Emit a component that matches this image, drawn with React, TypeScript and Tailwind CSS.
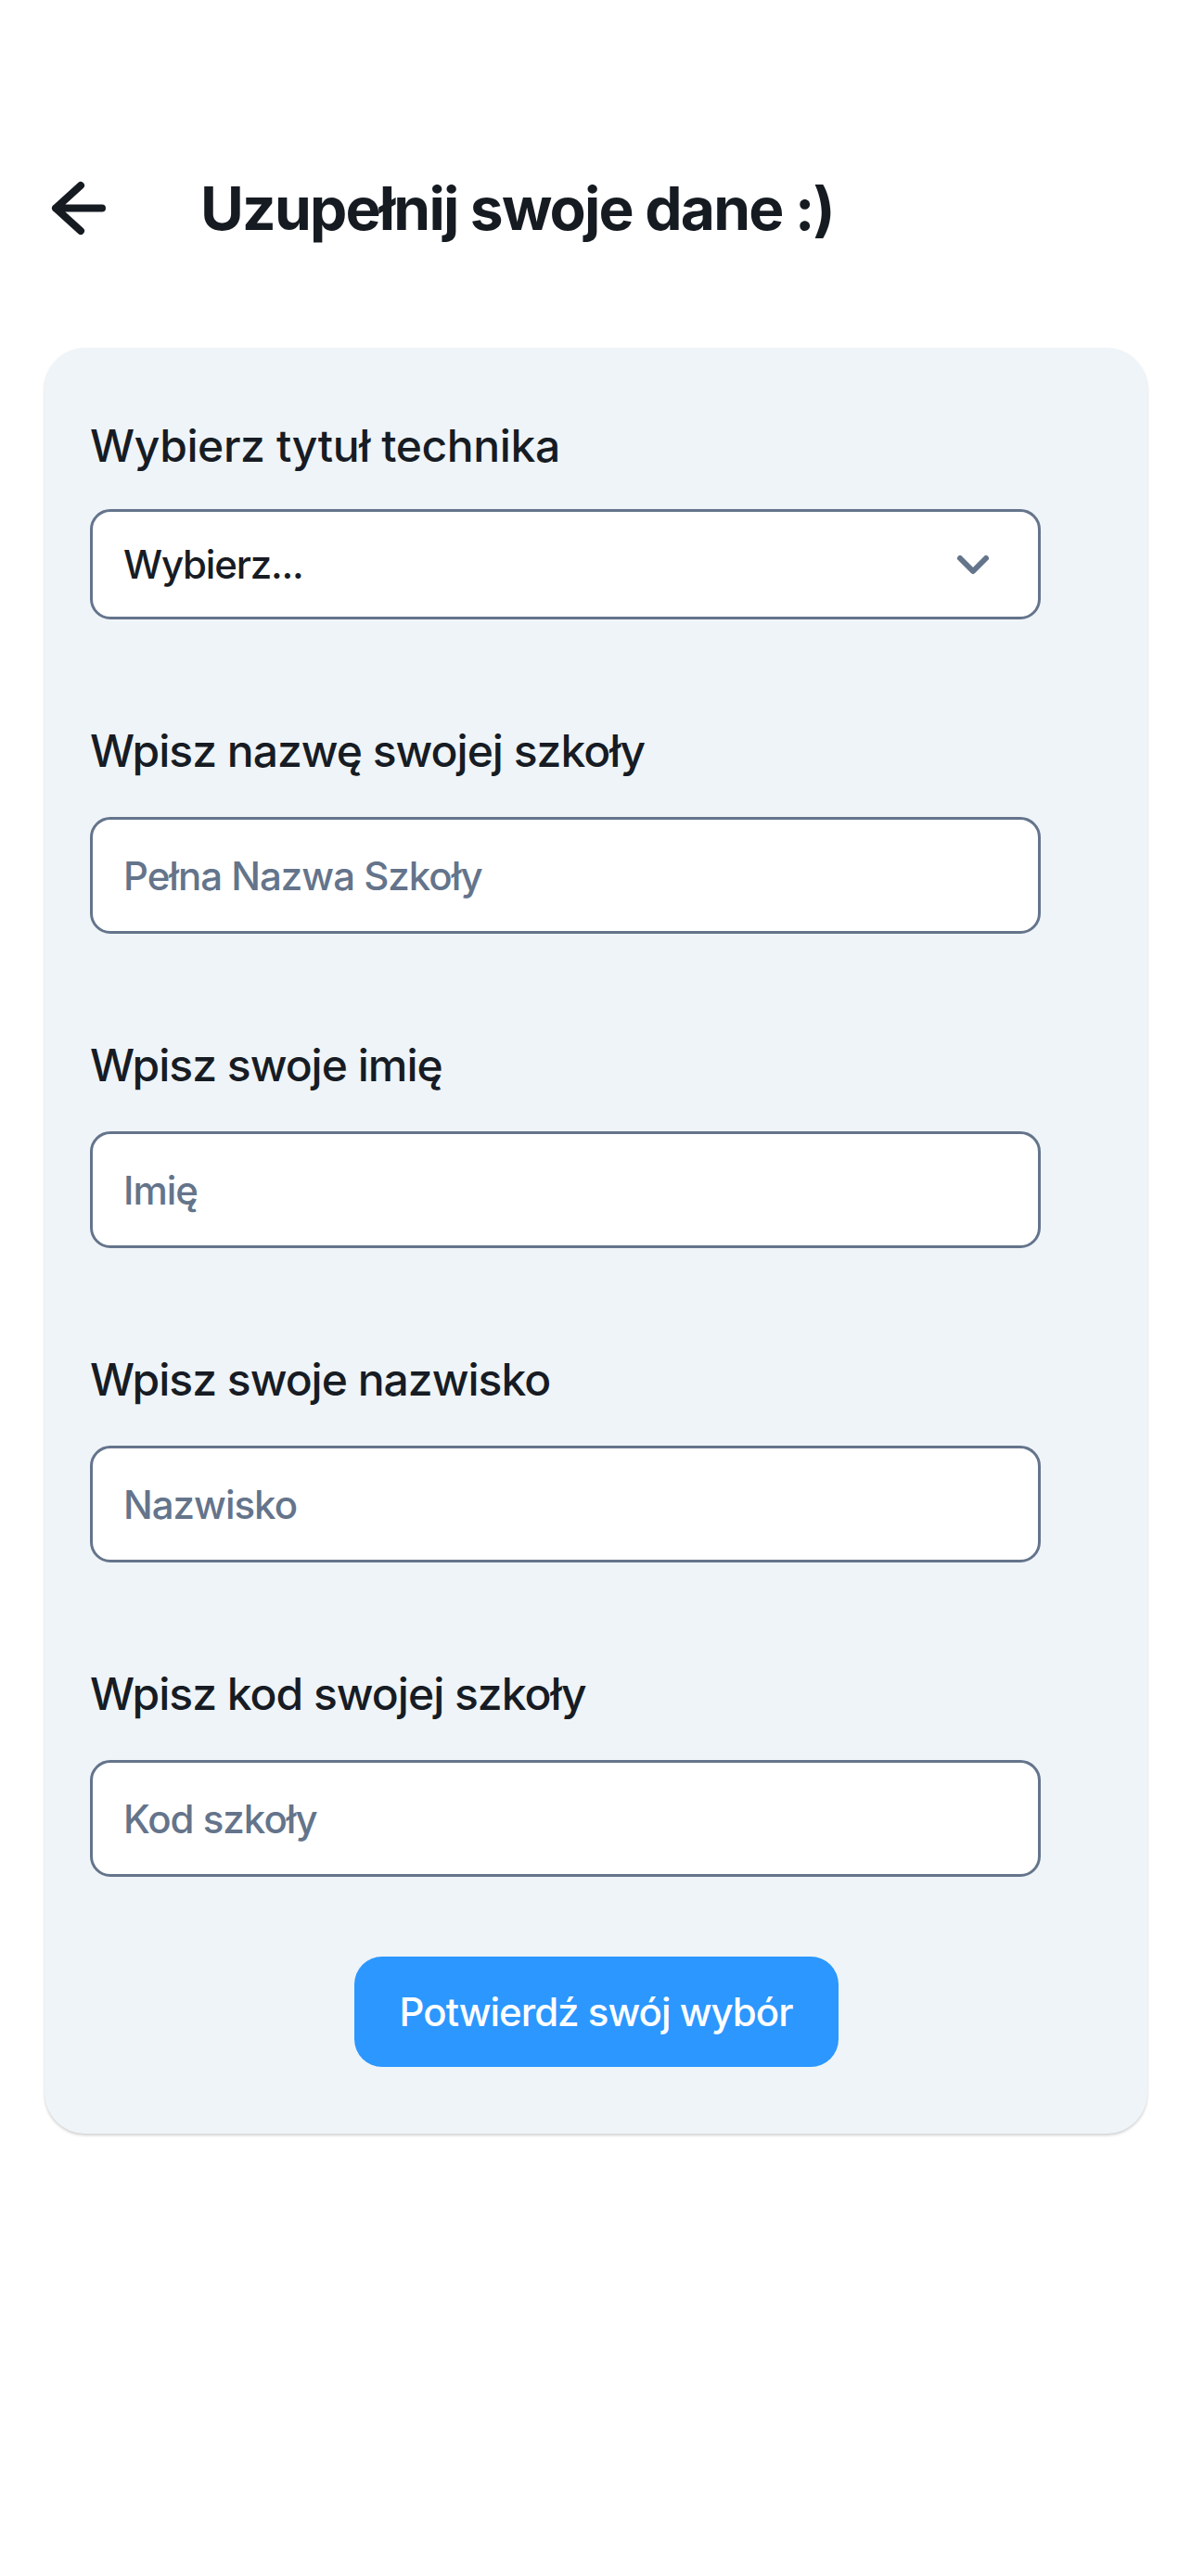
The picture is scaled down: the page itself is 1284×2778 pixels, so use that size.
import React from 'react';

type FieldProps = {
  label: string;
  placeholder: string;
};

const BackArrow = () => (
  <svg width="62" height="60" viewBox="0 0 62 60" fill="none">
    <path
      d="M33 5 L6 29.5 L33 54 M6 29.5 H56"
      stroke="#161b22"
      strokeWidth="8"
      strokeLinecap="round"
      strokeLinejoin="round"
    />
  </svg>
);

const Chevron = () => (
  <svg width="40" height="28" viewBox="0 0 40 28" fill="none">
    <path
      d="M6 7 L20 21 L34 7"
      stroke="#64748b"
      strokeWidth="6"
      strokeLinecap="round"
      strokeLinejoin="round"
    />
  </svg>
);

const Field = ({ label, placeholder }: FieldProps) => (
  <div className="mt-[113px]">
    <label className="block h-[58px] text-[48px] leading-[58px] font-medium text-[#171c24] tracking-[-1px]">
      {label}
    </label>
    <input
      type="text"
      placeholder={placeholder}
      className="mt-[42px] block w-[1025px] h-[126px] rounded-[22px] border-[3px] border-[#64748b] bg-white pl-[33px] text-[42px] font-medium tracking-[-1px] text-[#171c24] placeholder:text-[#64748b] outline-none"
    />
  </div>
);

export default function App() {
  return (
    <div className="min-h-[2778px] bg-white font-['Inter',sans-serif]">
      <div className="flex items-center pt-[190px] pl-[54px]">
        <BackArrow />
        <h1 className="ml-[100px] h-[70px] text-[64px] leading-[70px] font-bold text-[#161b22] tracking-[-1.8px]">
          Uzupełnij swoje dane :)
        </h1>
      </div>

      <div className="mt-[115px] ml-[48px] w-[1189px] rounded-[44px] bg-[#eff4f8] pt-[77px] pb-[72px] pl-[49px] shadow-[0_2px_3px_rgba(0,0,0,0.18)]">
        <div>
          <div className="h-[58px] text-[48px] leading-[58px] font-medium text-[#171c24] tracking-[-0.4px]">
            Wybierz tytuł technika
          </div>
          <div className="mt-[39px] flex h-[119px] w-[1025px] items-center justify-between rounded-[22px] border-[3px] border-[#64748b] bg-white pl-[33px] pr-[50px]">
            <span className="text-[42px] font-medium tracking-[-1.2px] text-[#171c24]">Wybierz...</span>
            <Chevron />
          </div>
        </div>

        <Field label="Wpisz nazwę swojej szkoły" placeholder="Pełna Nazwa Szkoły" />
        <Field label="Wpisz swoje imię" placeholder="Imię" />
        <Field label="Wpisz swoje nazwisko" placeholder="Nazwisko" />
        <Field label="Wpisz kod swojej szkoły" placeholder="Kod szkoły" />

        <div className="mt-[86px] pr-[49px] flex justify-center">
          <button className="h-[119px] w-[522px] rounded-[30px] bg-[#2b97ff] text-[42px] font-medium tracking-[-1px] text-white">
            Potwierdź swój wybór
          </button>
        </div>
      </div>
    </div>
  );
}
